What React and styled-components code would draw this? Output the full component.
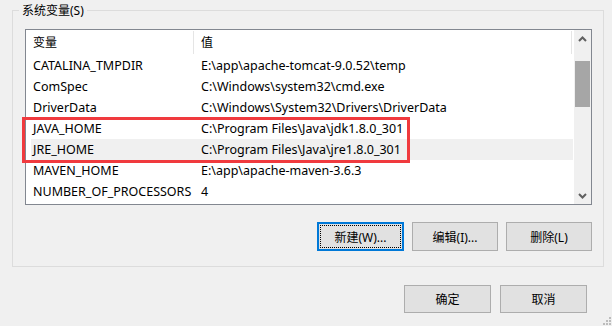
import React from 'react';
import styled, { createGlobalStyle } from 'styled-components';

const GlobalStyle = createGlobalStyle`
  html, body {
    margin: 0;
    padding: 0;
    background: #f0f0f0;
  }
  body {
    font-family: "Noto Sans", "Noto Sans CJK SC", sans-serif;
    font-size: 12px;
    color: #000;
  }
`;

const Window = styled.div`
  position: relative;
  width: 612px;
  height: 326px;
  overflow: hidden;
  background: #f0f0f0;
  display: flex;
  flex-direction: column;
`;

const GroupBox = styled.div`
  position: relative;
  margin: 10px 8px 0 12px;
  border: 1px solid #dcdcdc;
  padding: 18px 11px 15px 12px;
  display: flex;
  flex-direction: column;
  gap: 17px;
`;

const Legend = styled.div`
  position: absolute;
  top: -8px;
  left: 6px;
  padding: 0 3px;
  background: #f0f0f0;
  line-height: 16px;
`;

const ListBox = styled.div`
  position: relative;
  height: 176px;
  box-sizing: border-box;
  border: 1px solid #828790;
  background: #fff;
  display: flex;
`;

const ListArea = styled.div`
  flex: 1;
  overflow: hidden;
`;

const HeaderRow = styled.div`
  display: flex;
  height: 25px;
  align-items: center;
`;

const HeaderCell = styled.div`
  width: ${p => p.$w}px;
  box-sizing: border-box;
  padding-left: 7px;
  height: 23px;
  line-height: 23px;
  border-right: 1px solid #e5e5e5;
`;

const Row = styled.div`
  display: flex;
  height: 21px;
  line-height: 21px;
  font-size: 12.5px;
  margin-left: ${p => (p.$hl ? 5 : 0)}px;
  background: ${p => (p.$hl ? '#f0f0f0' : 'transparent')};
`;

const Cell = styled.div`
  width: ${p => p.$w}px;
  box-sizing: border-box;
  padding-left: ${p => p.$pl}px;
  white-space: nowrap;
  overflow: hidden;
`;

const ScrollBar = styled.div`
  width: 17px;
  background: #f0f0f0;
  display: flex;
  flex-direction: column;
  margin-left: 1px;
`;

const ArrowButton = styled.div`
  height: 17px;
  display: flex;
  align-items: center;
  justify-content: center;
`;

const Track = styled.div`
  flex: 1;
  padding-top: 14px;
`;

const Thumb = styled.div`
  margin: 0 1px;
  height: 46px;
  background: #a6a6a6;
`;

const Highlight = styled.div`
  position: absolute;
  left: -4px;
  top: 87px;
  width: 388px;
  height: 46px;
  box-sizing: border-box;
  border: 3px solid #f03a3e;
  pointer-events: none;
`;

const ButtonRow = styled.div`
  display: flex;
  justify-content: flex-end;
  gap: ${p => p.$gap}px;
  margin-right: ${p => p.$mr || 0}px;
`;

const Button = styled.div`
  position: relative;
  width: ${p => p.$w}px;
  height: ${p => p.$h}px;
  box-sizing: border-box;
  background: #e1e1e1;
  border: ${p => (p.$default ? '2px solid #0078d7' : '1px solid #adadad')};
  display: flex;
  align-items: center;
  justify-content: center;
  ${p =>
    p.$default &&
    `&::after {
      content: '';
      position: absolute;
      inset: 1px;
      border: 1px dotted #000;
    }`}
`;

const Footer = styled.div`
  margin-top: 18px;
`;

const Grip = styled.svg`
  position: absolute;
  right: 0;
  bottom: 0;
`;

const vars = [
  ['CATALINA_TMPDIR', 'E:\\app\\apache-tomcat-9.0.52\\temp'],
  ['ComSpec', 'C:\\Windows\\system32\\cmd.exe'],
  ['DriverData', 'C:\\Windows\\System32\\Drivers\\DriverData'],
  ['JAVA_HOME', 'C:\\Program Files\\Java\\jdk1.8.0_301'],
  ['JRE_HOME', 'C:\\Program Files\\Java\\jre1.8.0_301'],
  ['MAVEN_HOME', 'E:\\app\\apache-maven-3.6.3'],
  ['NUMBER_OF_PROCESSORS', '4'],
];

const Chevron = ({ up }) => (
  <svg width="9" height="6" viewBox="0 0 9 6">
    <polyline
      points={up ? '1,5 4.5,1.5 8,5' : '1,1 4.5,4.5 8,1'}
      fill="none"
      stroke="#606060"
      strokeWidth="2"
    />
  </svg>
);

export default function App() {
  return (
    <Window>
      <GlobalStyle />
      <GroupBox>
        <Legend>系统变量(S)</Legend>
        <ListBox>
          <ListArea>
            <HeaderRow>
              <HeaderCell $w={168}>变量</HeaderCell>
              <HeaderCell $w={378}>值</HeaderCell>
            </HeaderRow>
            {vars.map(([k, v], i) => (
              <Row key={k} $hl={i === 4}>
                <Cell $w={i === 4 ? 163 : 168} $pl={i === 4 ? 2 : 7}>{k}</Cell>
                <Cell $w={370} $pl={7}>{v}</Cell>
              </Row>
            ))}
          </ListArea>
          <ScrollBar>
            <ArrowButton><Chevron up /></ArrowButton>
            <Track><Thumb /></Track>
            <ArrowButton><Chevron /></ArrowButton>
          </ScrollBar>
          <Highlight />
        </ListBox>
        <ButtonRow $gap={8}>
          <Button $w={87} $h={29} $default>新建(W)...</Button>
          <Button $w={86} $h={29}>编辑(I)...</Button>
          <Button $w={86} $h={29}>删除(L)</Button>
        </ButtonRow>
      </GroupBox>
      <Footer>
        <ButtonRow $gap={9} $mr={25}>
          <Button $w={87} $h={28}>确定</Button>
          <Button $w={87} $h={28}>取消</Button>
        </ButtonRow>
      </Footer>
      <Grip width="12" height="12" viewBox="0 0 12 12">
        <g fill="#bcbcbc">
          <rect x="9" y="3" width="2" height="2" />
          <rect x="6" y="6" width="2" height="2" />
          <rect x="9" y="6" width="2" height="2" />
          <rect x="3" y="9" width="2" height="2" />
          <rect x="6" y="9" width="2" height="2" />
          <rect x="9" y="9" width="2" height="2" />
        </g>
      </Grip>
    </Window>
  );
}
